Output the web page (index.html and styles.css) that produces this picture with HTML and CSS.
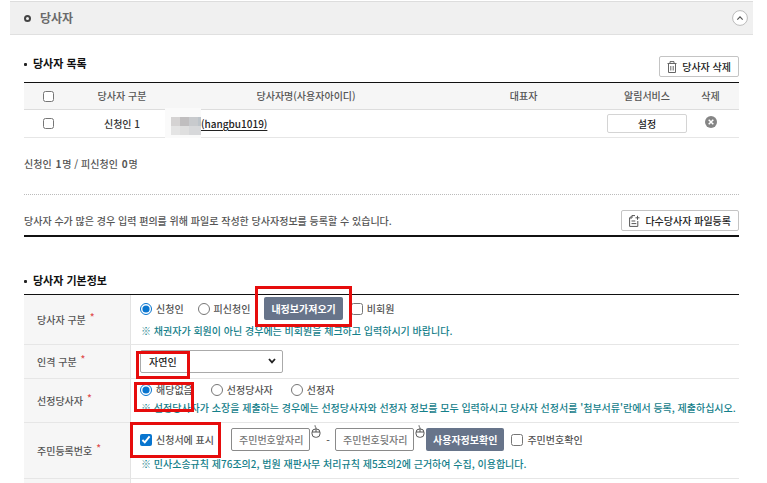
FILE: index.html
```html
<!DOCTYPE html>
<html lang="ko">
<head>
<meta charset="utf-8">
<title>당사자</title>
<link rel="stylesheet" href="styles.css">
</head>
<body>
<main class="page">
  <header class="section-head">
    <h1 class="section-title">당사자</h1>
    <button class="toggle" type="button" aria-label="접기">
      <svg viewBox="0 0 16 16" width="16" height="16"><circle cx="8" cy="8" r="7.4" fill="#fff" stroke="#bbb"/><path d="M5.3 9.6 8 6.9l2.7 2.7" fill="none" stroke="#555" stroke-width="1.2"/></svg>
    </button>
  </header>

  <div class="content">
    <div class="list-head">
      <h2 class="sub-title">당사자 목록</h2>
      <button class="btn" type="button">
        <svg viewBox="0 0 10 12" width="10" height="12" fill="none" stroke="#666"><path d="M.5 2.5h9M3 2V.6h4V2M1.5 3v8.5h7V3M3.8 5v4.5M6.2 5v4.5"/></svg>
        당사자 삭제
      </button>
    </div>

    <table class="party-table">
      <colgroup><col class="col-check"><col class="col-type"><col class="col-name"><col><col class="col-alarm"><col class="col-delete"></colgroup>
      <thead>
        <tr>
          <th><input type="checkbox" class="small-check" aria-label="전체 선택"></th>
          <th>당사자 구분</th>
          <th>당사자명(사용자아이디)</th>
          <th>대표자</th>
          <th>알림서비스</th>
          <th class="delete-cell">삭제</th>
        </tr>
      </thead>
      <tbody>
        <tr>
          <td><input type="checkbox" class="small-check" aria-label="신청인 1 선택"></td>
          <td>신청인 1</td>
          <td class="name-cell">
            <svg class="mask" viewBox="0 0 36 30" width="36" height="30" shape-rendering="crispEdges"><path fill="#fafafa" d="M0 0h36v30H0z"/><path fill="#d5d3d3" d="M6 9h9v9H6z"/><path fill="#c0bebf" d="M15 9h9v9h-9z"/><path fill="#c8cacd" d="M24 9h9v9h-9z"/><path fill="#bdc4ca" d="M33 9h3v9h-3z"/><path fill="#e4e4e4" d="M6 18h9v9H6z"/><path fill="#dfdfdf" d="M15 18h9v9h-9z"/><path fill="#d7d8da" d="M24 18h12v9H24z"/></svg>
            <a class="name-link" href="#">(hangbu1019)</a>
          </td>
          <td></td>
          <td><button class="btn btn-set" type="button">설정</button></td>
          <td class="delete-cell">
            <button class="remove" type="button" aria-label="삭제"><svg viewBox="0 0 12 12" width="12" height="12"><circle cx="6" cy="6" r="6" fill="#858585"/><path d="m3.7 3.7 4.6 4.6m0-4.6L3.7 8.3" stroke="#fff" stroke-width="1.5"/></svg></button>
          </td>
        </tr>
      </tbody>
    </table>

    <p class="summary">신청인 <b>1</b>명 / 피신청인 <b>0</b>명</p>

    <div class="file-row">
      <p>당사자 수가 많은 경우 입력 편의를 위해 파일로 작성한 당사자정보를 등록할 수 있습니다.</p>
      <button class="btn" type="button">
        <svg viewBox="0 0 11 12" width="11" height="12" fill="none" stroke="#555"><path d="M6 .6H3L.6 3v8.4h8.2V6M3 .6V3H.6M2.5 6h3.8M2.5 8.6h4.8M8.5.8v4M6.5 2.8h4"/></svg>
        다수당사자 파일등록
      </button>
    </div>

    <h2 class="sub-title info-title">당사자 기본정보</h2>

    <table class="form-table">
      <colgroup><col class="col-label"><col></colgroup>
      <tbody>
        <tr class="row-type">
          <th scope="row">당사자 구분<span class="required">*</span></th>
          <td>
            <div class="fields">
              <label class="choice"><input type="radio" name="type" checked>신청인</label>
              <label class="choice"><input type="radio" name="type">피신청인</label>
              <span class="marked"><button class="btn-dark" type="button">내정보가져오기</button><i class="mark mark-button"></i></span>
              <label class="choice nonmember"><input type="checkbox">비회원</label>
            </div>
            <p class="note">※ 채권자가 회원이 아닌 경우에는 비회원을 체크하고 입력하시기 바랍니다.</p>
          </td>
        </tr>
        <tr class="row-person">
          <th scope="row"><label for="person">인격 구분</label><span class="required">*</span></th>
          <td>
            <div class="select-box marked">
              <select id="person"><option>자연인</option></select>
              <svg class="arrow" viewBox="0 0 8 6" width="8" height="6"><path d="m1 1 3 3.4L7 1" fill="none" stroke="#222" stroke-width="1.8"/></svg>
              <i class="mark mark-select"></i>
            </div>
          </td>
        </tr>
        <tr class="row-chosen">
          <th scope="row">선정당사자<span class="required">*</span></th>
          <td>
            <div class="fields fields-wide marked">
              <label class="choice"><input type="radio" name="chosen" checked>해당없음</label>
              <label class="choice"><input type="radio" name="chosen">선정당사자</label>
              <label class="choice"><input type="radio" name="chosen">선정자</label>
              <i class="mark mark-chosen"></i>
            </div>
            <p class="note">※ 선정당사자가 소장을 제출하는 경우에는 선정당사자와 선정자 정보를 모두 입력하시고 당사자 선정서를 '첨부서류'란에서 등록, 제출하십시오.</p>
          </td>
        </tr>
        <tr class="row-number">
          <th scope="row">주민등록번호<span class="required">*</span></th>
          <td>
            <div class="fields id-fields">
              <label class="choice show-choice marked"><input type="checkbox" checked>신청서에 표시<i class="mark mark-show"></i></label>
              <input class="text" type="text" placeholder="주민번호앞자리" aria-label="주민번호앞자리">
              <svg class="mouse" viewBox="0 0 10 13" width="10" height="13" fill="none" stroke="#555"><rect x="1" y="4" width="8" height="8.3" rx="3.5"/><path d="M1 7h8M5 7V3.5C5 2 4 2 4 .3"/></svg>
              <span class="dash">-</span>
              <input class="text" type="text" placeholder="주민번호뒷자리" aria-label="주민번호뒷자리">
              <svg class="mouse" viewBox="0 0 10 13" width="10" height="13" fill="none" stroke="#555"><rect x="1" y="4" width="8" height="8.3" rx="3.5"/><path d="M1 7h8M5 7V3.5C5 2 4 2 4 .3"/></svg>
              <button class="btn-dark" type="button">사용자정보확인</button>
              <label class="choice verify"><input type="checkbox">주민번호확인</label>
            </div>
            <p class="note">※ 민사소송규칙 제76조의2, 법원 재판사무 처리규칙 제5조의2에 근거하여 수집, 이용합니다.</p>
          </td>
        </tr>
        <tr class="row-next"><th></th><td></td></tr>
      </tbody>
    </table>
  </div>
</main>
</body>
</html>
```
FILE: styles.css
```css
*, *::before { box-sizing: border-box; }

body {
  margin: 0;
  background: #fff;
  color: #555;
  font: 500 10px/16px "Noto Sans CJK KR", "Noto Sans", sans-serif;
}

h1, h2, p { margin: 0; }
button, input, select { font: inherit; color: inherit; margin: 0; }
button { cursor: pointer; }
svg { display: block; flex: none; }

.page { padding: 1px 14px 0 10px; }

.section-head {
  display: flex;
  align-items: center;
  justify-content: space-between;
  height: 34px;
  padding: 0 5px 0 14px;
  background: #f0f0f0;
  border-top: 1px solid #ddd;
  border-bottom: 1px solid #e0e0e0;
}
.section-title {
  display: flex;
  align-items: center;
  gap: 9px;
  font-size: 12px;
  font-weight: 700;
  color: #6a6a6a;
}
.section-title::before {
  content: "";
  width: 7px;
  height: 7px;
  border: 2px solid #444;
  border-radius: 50%;
}
.toggle { padding: 0; border: 0; background: none; }

.content { padding: 0 14px; }

.sub-title {
  display: flex;
  align-items: center;
  gap: 6px;
  font-size: 11px;
  line-height: 18px;
  font-weight: 700;
  color: #111;
}
.sub-title::before {
  content: "";
  width: 3px;
  height: 3px;
  margin-top: 3px;
  border-radius: 1px;
  background: #222;
}

.list-head {
  display: flex;
  justify-content: space-between;
  align-items: flex-end;
  padding: 19px 0 5px;
}
.list-head .sub-title { margin-bottom: 5px; }

.btn {
  display: flex;
  align-items: center;
  gap: 5px;
  height: 21px;
  padding: 0 7px;
  background: #fff;
  border: 1px solid #c4c4c4;
  border-radius: 2px;
  color: #222;
}

table { width: 100%; border-collapse: separate; border-spacing: 0; table-layout: fixed; }
th, td { padding: 0; font-weight: 500; }

.party-table { border-top: 1px solid #111; text-align: center; }
.party-table th { height: 27px; background: #f6f6f6; border-bottom: 1px solid #ddd; }
.party-table td { height: 28px; border-bottom: 1px solid #e6e6e6; color: #333; }
.col-check { width: 48px; }
.col-type { width: 100px; }
.col-name { width: 37.5%; }
.col-alarm { width: 80px; }
.col-delete { width: 52px; }
.party-table .delete-cell { padding-right: 5px; }
.small-check { display: block; width: 11px; height: 11px; margin: 0 auto; }
.party-table .name-cell { position: relative; padding-left: 29px; text-align: left; }
.mask { position: absolute; left: -7px; top: -2px; }
.name-link { color: #222; text-underline-offset: 2px; }
.btn-set { width: 100%; height: 19px; justify-content: center; border-color: #d4d4d4; }
.remove { display: block; margin: 0 auto 4px; padding: 0; border: 0; background: none; }

.summary { padding: 18px 0 22px; }
.summary b { margin: 0 1px; }
.file-row {
  display: flex;
  align-items: center;
  justify-content: space-between;
  padding: 15px 0 4px;
  border-top: 1px dotted #bbb;
  border-bottom: 2px solid #111;
}

.info-title { padding: 34px 0 5px; }

.form-table { border-top: 1px solid #111; }
.col-label { width: 107px; }
.form-table th {
  padding-left: 13px;
  text-align: left;
  background: #f6f6f6;
  border-right: 1px solid #e3e3e3;
  border-bottom: 1px solid #e6e6e6;
}
.form-table td { padding-left: 9px; border-bottom: 1px solid #e6e6e6; vertical-align: top; white-space: nowrap; }
.required { margin-left: 4px; color: #e05050; line-height: 10px; vertical-align: 3px; }
.row-type { height: 50px; }
.row-person { height: 34px; }
.row-chosen { height: 44px; }
.row-number { height: 56px; }
.row-next { height: 5px; }

.fields { display: flex; align-items: center; gap: 14px; }
.row-type .fields { padding-top: 2px; }
.fields-wide { gap: 18px; padding-top: 3px; }
.id-fields { gap: 1px; padding-top: 5px; }
.choice { display: flex; align-items: center; gap: 4px; }
.choice input { width: 12px; height: 12px; accent-color: #0875cf; }
.nonmember { margin-left: -6px; }
.show-choice { margin-right: 16px; }
.verify { margin-left: 6px; }
.note { padding-left: 1px; color: #14808a; }
.row-type .note { padding-top: 3px; }
.row-chosen .note { padding-top: 2px; }
.row-number .note { padding-top: 5px; }

.btn-dark {
  height: 23px;
  padding: 0 7px;
  border: 0;
  border-radius: 2px;
  background: #67748a;
  color: #fff;
  font-weight: 700;
}
.text {
  width: 79px;
  height: 23px;
  padding: 0 3px 0 7px;
  border: 1px solid #8a8a8a;
  border-radius: 2px;
}
.text::placeholder { color: #777; opacity: 1; }
.mouse { align-self: flex-start; margin-top: -3px; }
.dash { width: 12px; text-align: center; }

.select-box { width: 143px; margin-top: 5px; }
.select-box select {
  display: block;
  width: 100%;
  height: 23px;
  padding: 0 8px;
  appearance: none;
  background: #fff;
  border: 1px solid #aaa;
  border-radius: 2px;
  color: #222;
}
.arrow { position: absolute; right: 7px; top: 8px; }

/* Red callouts drawn over the controls */
.marked { position: relative; }
.mark { position: absolute; border: 3px solid #e60c0c; pointer-events: none; }
.mark-button { inset: -11px -9px -7px; }
.mark-select { left: -4px; top: 1px; width: 54px; height: 28px; }
.mark-chosen { left: -6px; top: 3px; width: 60px; height: 30px; }
.mark-show { inset: -10px -7px -10px -10px; }
.row-type .marked { display: flex; }
```
